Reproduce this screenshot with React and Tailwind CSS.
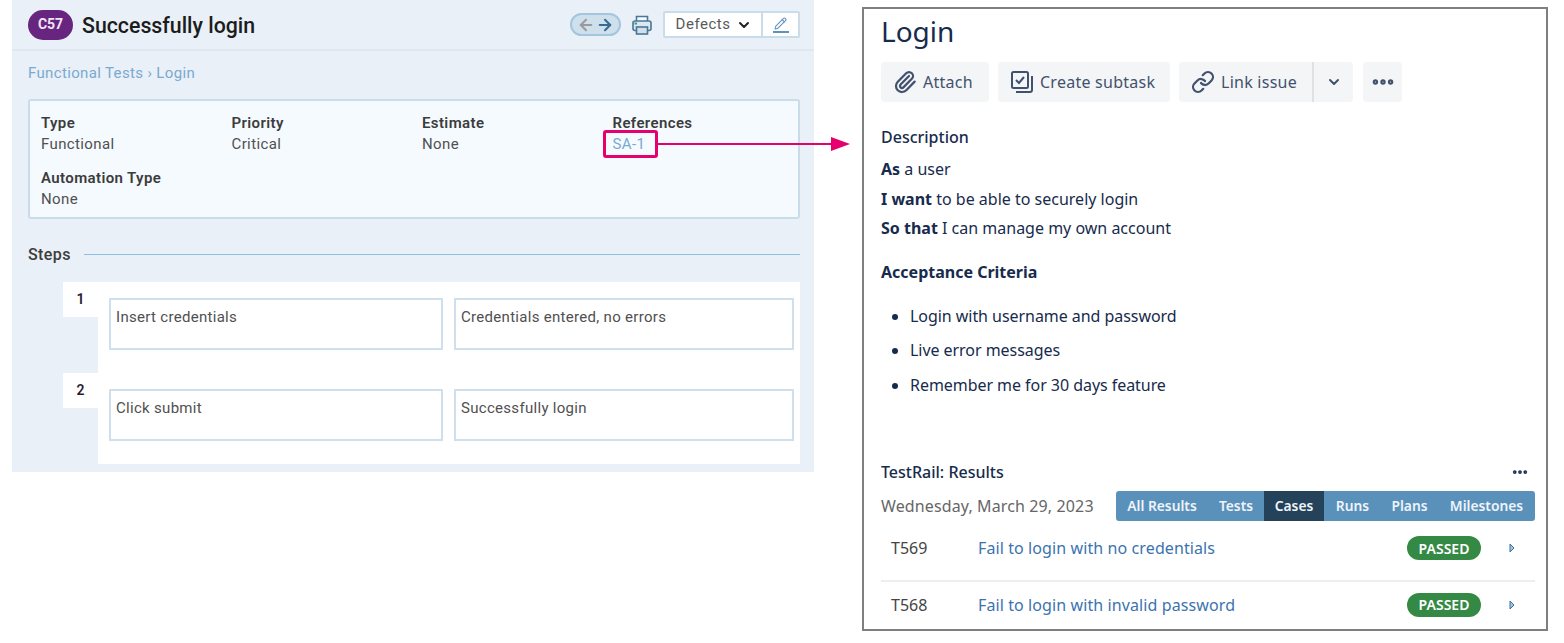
import { Paperclip, Link, ChevronDown, MoreHorizontal, ArrowLeft, ArrowRight, Pencil } from "lucide-react";

const FIELDS = [
  { label: "Type", value: "Functional" },
  { label: "Priority", value: "Critical" },
  { label: "Estimate", value: "None" },
];

const STEPS = [
  { n: 1, action: "Insert credentials", expected: "Credentials entered, no errors" },
  { n: 2, action: "Click submit", expected: "Successfully login" },
];

const TABS = ["All Results", "Tests", "Cases", "Runs", "Plans", "Milestones"];

const TAB_WIDTHS = {
  "All Results": "w-[92px]",
  Tests: "w-[56px]",
  Cases: "w-[60px]",
  Runs: "w-[57px]",
  Plans: "w-[57px]",
  Milestones: "w-[97px]",
};

function Field({ label, value, link }) {
  return (
    <div className="w-[190.5px] shrink-0 h-[44px] tracking-[0.38px]">
      <p className="text-[15px] leading-[22px] font-semibold text-[#3c3c3c]">{label}</p>
      <p className={`text-[15px] leading-[21px] ${link ? "text-[#7ba9d0]" : "text-[#505050]"}`}>{value}</p>
    </div>
  );
}

function StepRow({ step }) {
  return (
    <div className="flex h-[91px]">
      <div className="w-[35px] h-[35px] bg-white flex items-center justify-center text-[14px] font-semibold text-[#2a1a2a]">
        {step.n}
      </div>
      <div className="w-[702px] bg-white flex gap-[11px] pl-[11px] pt-[16px]">
        <div className="w-[334px] h-[52px] border-2 border-[#cfe0ec] px-[5px] pt-[6px] text-[15px] leading-[22px] tracking-[0.3px] text-[#505050]">
          {step.action}
        </div>
        <div className="w-[340px] h-[52px] border-2 border-[#cfe0ec] px-[5px] pt-[6px] text-[15px] leading-[22px] tracking-[0.3px] text-[#505050]">
          {step.expected}
        </div>
      </div>
    </div>
  );
}

function ActionButton({ children, className = "" }) {
  return (
    <div className={`h-[40px] bg-[#f4f5f7] rounded-[4px] flex items-center text-[16px] tracking-[0.25px] text-[#42526e] ${className}`}>
      {children}
    </div>
  );
}

function ResultRow({ id, title, className }) {
  return (
    <div className={`flex items-center pl-[10px] ${className}`}>
      <span className="w-[87px] text-[16px] text-[#444444]">{id}</span>
      <span className="flex-1 text-[16px] tracking-[0.1px] text-[#3b73af]">{title}</span>
      <span className="w-[74px] h-[24px] rounded-full bg-[#348a44] text-white text-[14px] font-semibold flex items-center justify-center">
        PASSED
      </span>
      <span className="w-[54px] flex justify-center pl-[8px]">
        <svg width="6" height="10" viewBox="0 0 6 10">
          <path d="M1 1 L5 5 L1 9 Z" fill="#a9c4dc" stroke="#3b6f9c" strokeWidth="1" />
        </svg>
      </span>
    </div>
  );
}

export default function App() {
  return (
    <div className="relative w-[1564px] h-[643px] bg-white overflow-hidden flex items-start pl-[12px]">
      {/* LEFT PANEL */}
      <div className="w-[802px] h-[472px] bg-[#e9f0f7] font-['Roboto',sans-serif]">
        <div className="h-[51px] border-b-2 border-[#dfe8f0] flex items-center pl-[16px] pr-[14px]">
          <span className="w-[45px] h-[30px] rounded-full bg-[#68257f] text-[#f0e6f4] text-[14px] font-bold flex items-center justify-center">
            C57
          </span>
          <h1 className="ml-[9px] pt-[3px] text-[21.3px] font-medium text-[#1c1c1c]">Successfully login</h1>
          <div className="ml-auto flex items-center">
            <div className="w-[51px] h-[23px] rounded-full bg-[#cde0ec] border-2 border-[#a3c6de] flex items-center justify-center gap-[1px]">
              <ArrowLeft size={18} strokeWidth={2.75} className="text-[#9a9a9a]" />
              <ArrowRight size={18} strokeWidth={2.75} className="text-[#3a6a92]" />
            </div>
            <svg className="ml-[10px]" width="22" height="22" viewBox="0 0 22 22" fill="none" stroke="#4c7696" strokeWidth="1.6">
              <path d="M5.5 7V2.5h11V7" fill="#f5faff" />
              <rect x="2" y="7" width="18" height="9.5" rx="2" fill="#dbe8f2" />
              <rect x="5.5" y="13" width="11" height="7" fill="#cfe0ec" />
              <rect x="3.5" y="8.5" width="2.5" height="2" fill="#2aa876" stroke="none" />
            </svg>
            <div className="ml-[10px] w-[137px] h-[27px] bg-white border-2 border-[#c9dcea] rounded-[2px] flex items-center">
              <div className="w-[96px] pl-[2px] flex items-center justify-center gap-[6px] text-[15px] text-[#5a5a5a] tracking-[0.5px]">
                Defects
                <ChevronDown size={16} strokeWidth={3} className="text-[#222222]" />
              </div>
              <div className="flex-1 h-full border-l-2 border-[#c9dcea] flex flex-col items-center justify-center">
                <Pencil size={13} className="text-[#5f93bd]" />
                <div className="w-[16px] h-[2px] bg-[#5f93bd] mt-[1px]"></div>
              </div>
            </div>
          </div>
        </div>

        <div className="pl-[16px] pr-[14px]">
          <p className="mt-[11px] text-[15px] leading-[22px] tracking-[0.35px] text-[#7ba9d0]">Functional Tests › Login</p>

          <div className="mt-[15px] h-[120px] bg-[#f5faff] border-2 border-[#c9dcea] rounded-[3px] pl-[11px] pt-[11px]">
            <div className="flex">
              {FIELDS.map((f) => (
                <Field key={f.label} label={f.label} value={f.value} />
              ))}
              <Field label="References" value="SA-1" link />
            </div>
            <div className="mt-[11px]">
              <Field label="Automation Type" value="None" />
            </div>
          </div>

          <div className="mt-[25px] flex items-center h-[22px]">
            <span className="text-[16px] font-medium tracking-[0.4px] text-[#3c3c3c]">Steps</span>
            <div className="ml-[13px] mb-[1px] flex-1 h-[1px] bg-[#8fbfe0]"></div>
          </div>

          <div className="mt-[16px] pl-[35px]">
            {STEPS.map((s) => (
              <StepRow key={s.n} step={s} />
            ))}
          </div>
        </div>
      </div>

      {/* RIGHT PANEL */}
      <div className="ml-[48px] mt-[7px] w-[686px] h-[624px] border-2 border-[#7f7f7f] pl-[17px] pr-[11px] overflow-hidden font-['Noto_Sans',sans-serif] text-[#172b4d]">
        <h2 className="text-[28px] leading-[44px] text-[#172b4d]">Login</h2>

        <div className="mt-[9px] flex gap-[9px]">
          <ActionButton className="w-[108px] pl-[12px] gap-[6px]">
            <Paperclip size={24} strokeWidth={2.25} />
            Attach
          </ActionButton>
          <ActionButton className="w-[172px] pl-[12px] gap-[6px]">
            <svg width="24" height="24" viewBox="0 0 24 24" fill="none" stroke="currentColor" strokeWidth="2">
              <rect x="2" y="2" width="16" height="16" rx="1.5" />
              <path d="M6 10l3 3 5-6" />
              <path d="M22 6v14a2 2 0 0 1-2 2H6" />
            </svg>
            Create subtask
          </ActionButton>
          <ActionButton className="w-[174px]">
            <div className="w-[135px] h-full pl-[12px] flex items-center gap-[6px] border-r-2 border-[#dfe1e6]">
              <Link size={24} strokeWidth={2.25} />
              Link issue
            </div>
            <div className="flex-1 flex justify-center">
              <ChevronDown size={16} strokeWidth={3} />
            </div>
          </ActionButton>
          <ActionButton className="w-[39px] justify-center ml-[1px]">
            <MoreHorizontal size={26} strokeWidth={3} />
          </ActionButton>
        </div>

        <p className="mt-[22px] text-[16px] leading-[26px] font-medium">Description</p>
        <div className="mt-[5px] text-[16px] leading-[29.6px]">
          <p><b className="font-bold">As</b> a user</p>
          <p><b className="font-bold">I want</b> to be able to securely login</p>
          <p><b className="font-bold">So that</b> I can manage my own account</p>
        </div>

        <p className="mt-[15px] text-[16px] leading-[26px] font-bold">Acceptance Criteria</p>

        <ul className="mt-[14px] list-disc pl-[29px] text-[16px] leading-[34.5px] tracking-[-0.05px]">
          <li>Login with username and password</li>
          <li>Live error messages</li>
          <li>Remember me for 30 days feature</li>
        </ul>

        <div className="mt-[58px] h-[24px] flex items-center justify-between">
          <span className="text-[16px] font-medium">TestRail: Results</span>
          <MoreHorizontal size={18} strokeWidth={3} className="mr-[6px]" />
        </div>

        <div className="mt-[7px] flex items-center justify-between">
          <span className="text-[16px] tracking-[0.12px] text-[#666666]">Wednesday, March 29, 2023</span>
          <div className="h-[30px] flex bg-[#5a91bb] rounded-[3px] overflow-hidden">
            {TABS.map((t) => (
              <span
                key={t}
                className={`${TAB_WIDTHS[t]} flex items-center justify-center text-[13.8px] font-semibold text-[#eef4f9] ${
                  t === "Cases" ? "bg-[#24425a]" : ""
                }`}
              >
                {t}
              </span>
            ))}
          </div>
        </div>

        <div>
          <ResultRow id="T569" title="Fail to login with no credentials" className="h-[59px] pb-[5px]" />
          <div className="h-[2px] bg-[#eeeeee]"></div>
          <ResultRow id="T568" title="Fail to login with invalid password" className="h-[45px]" />
        </div>
      </div>

      {/* CALLOUT over the references link */}
      <div className="absolute left-[603px] top-[130px] w-[55px] h-[28px] border-[3px] border-[#e6006e] rounded-[3px]"></div>
      <svg className="absolute left-[657px] top-[136px]" width="194" height="16" viewBox="0 0 194 16">
        <path d="M0 8H176" stroke="#e6006e" strokeWidth="2" />
        <path d="M174 1 L193 8 L174 15 Z" fill="#e6006e" />
      </svg>
    </div>
  );
}
